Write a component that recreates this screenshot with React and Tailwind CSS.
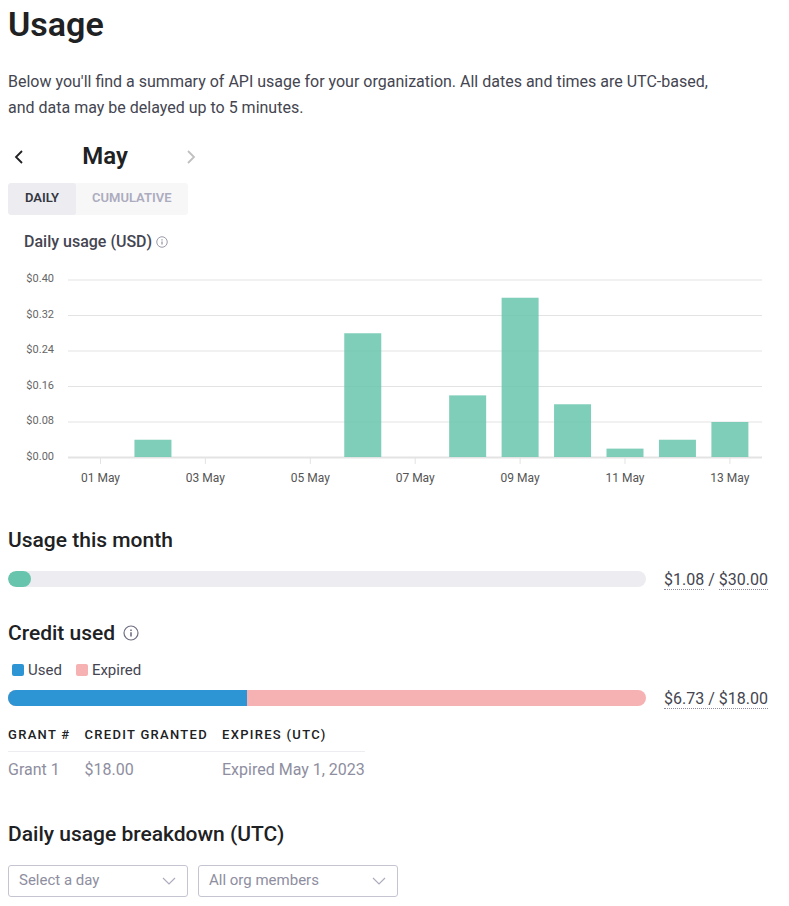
const DAYS = [
  { day: 1, usd: 0 },
  { day: 2, usd: 0.04 },
  { day: 3, usd: 0 },
  { day: 4, usd: 0 },
  { day: 5, usd: 0 },
  { day: 6, usd: 0.28 },
  { day: 7, usd: 0 },
  { day: 8, usd: 0.14 },
  { day: 9, usd: 0.36 },
  { day: 10, usd: 0.12 },
  { day: 11, usd: 0.02 },
  { day: 12, usd: 0.04 },
  { day: 13, usd: 0.08 },
];
const TICKS = [0.4, 0.32, 0.24, 0.16, 0.08, 0];

const yFor = (usd) => 197.5 - usd * 443.75;
const xFor = (day) => 92.5 + (day - 1) * 52.45;

function InfoIcon({ className }) {
  return (
    <svg viewBox="0 0 16 16" fill="none" stroke="currentColor" className={className} aria-hidden="true">
      <circle cx="8" cy="8" r="7" strokeWidth="1.2" />
      <path d="M8 7.2v4.2" strokeWidth="1.6" />
      <path d="M8 4.4v1.6" strokeWidth="1.6" />
    </svg>
  );
}

function Chevron({ className, d }) {
  return (
    <svg viewBox="0 0 16 16" fill="none" stroke="currentColor" className={className} aria-hidden="true">
      <path d={d} />
    </svg>
  );
}

function UsageChart() {
  return (
    <svg viewBox="0 0 760 232" className="block w-full" role="img" aria-label="Daily usage in USD">
      {TICKS.map((t) => (
        <g key={t}>
          <line x1="60" x2="754" y1={yFor(t)} y2={yFor(t)} stroke="#e3e3e3" strokeWidth={t === 0 ? 2 : 1.2} />
          <text x="46" y={yFor(t) + 2} textAnchor="end" className="fill-[#666666] text-[11px]">
            ${t.toFixed(2)}
          </text>
        </g>
      ))}
      {DAYS.filter((d) => d.day % 2 === 1).map((d) => (
        <g key={d.day}>
          <line x1={xFor(d.day)} x2={xFor(d.day)} y1="198" y2="204" stroke="#e3e3e3" />
          <text x={xFor(d.day)} y="222" textAnchor="middle" className="fill-[#555555] text-[12px]">
            {String(d.day).padStart(2, "0")} May
          </text>
        </g>
      ))}
      {DAYS.filter((d) => d.usd > 0).map((d) => (
        <rect
          key={d.day}
          x={xFor(d.day) - 18.5}
          y={yFor(d.usd)}
          width="37"
          height={197 - yFor(d.usd)}
          fill="#68c5ad"
          fillOpacity="0.85"
        />
      ))}
    </svg>
  );
}

function Dropdown({ label, text, className }) {
  return (
    <div className={"relative " + className}>
      <select
        aria-label={label}
        className="block h-8 w-full appearance-none rounded-[3px] border border-[#c5c5d2] bg-white pr-8 pb-0.5 pl-2.5 text-[15px] text-[#8e8ea0]"
      >
        <option>{text}</option>
      </select>
      <Chevron d="M2 5l6 6 6-6" className="pointer-events-none absolute top-2 right-[11px] size-4 stroke-[1.2] text-[#acacbe]" />
    </div>
  );
}

const dotted = "border-b border-dotted border-[#8e8ea0]";

export default function App() {
  return (
    <main className="bg-white pr-[21px] pb-2 pl-2 font-[Roboto,'Liberation_Sans',sans-serif] text-[#444550]">
      <h1 className="pt-1 text-[34px] leading-10 font-semibold text-[#202123]">Usage</h1>
      <p className="mt-[25px] pr-10 text-base leading-[26px]">
        Below you'll find a summary of API usage for your organization. All dates and times are UTC-based, and data may
        be delayed up to 5 minutes.
      </p>

      <div className="mt-[19px] flex w-[194px] items-center justify-between">
        <button type="button" aria-label="Previous month" className="p-[3px] text-[#202123]">
          <Chevron d="M11 3L5 9l6 6" className="size-4 stroke-[1.8]" />
        </button>
        <h2 className="text-2xl leading-8 font-semibold text-[#202123]">May</h2>
        <button type="button" aria-label="Next month" disabled className="p-[3px] text-[#c0c0c0]">
          <Chevron d="M5 3l6 6-6 6" className="size-4 stroke-[1.8]" />
        </button>
      </div>

      <div className="mt-[11px] inline-flex h-8 overflow-hidden rounded-[3px] bg-[#f7f7f8] text-[13px] font-semibold">
        <button type="button" className="min-w-[68px] rounded-[3px] bg-[#ececf1] px-4 pb-0.5 text-[#353740]">DAILY</button>
        <button type="button" className="px-4 pb-0.5 text-[#acacbe]">CUMULATIVE</button>
      </div>

      <section>
        <h3 className="mt-[15px] flex items-center gap-1 pl-4 text-base leading-6 font-medium">
          Daily usage (USD)
          <InfoIcon className="size-3 text-[#8e8ea0]" />
        </h3>
        <div className="mt-1.5">
          <UsageChart />
        </div>
      </section>

      <section className="mt-8">
        <h2 className="text-[21px] leading-8 font-medium text-[#202123]">Usage this month</h2>
        <div className="mt-3 flex items-center gap-4">
          <div className="h-4 flex-1 overflow-hidden rounded-full bg-[#ececf1]">
            <div className="h-full w-[3.6%] rounded-full bg-[#68c5ad]" />
          </div>
          <div className="min-w-[106px] pt-0.5 text-right text-base leading-5">
            <span className={dotted}>$1.08</span> / <span className={dotted}>$30.00</span>
          </div>
        </div>
      </section>

      <section className="mt-[27px]">
        <h2 className="flex items-center gap-2 text-[21px] leading-8 font-medium text-[#202123]">
          Credit used
          <InfoIcon className="size-4 text-[#6e6e80]" />
        </h2>
        <ul className="mt-[9px] flex gap-3.5 pl-1 text-[15px] leading-6">
          <li className="flex items-center gap-1">
            <span className="size-3 rounded-xs bg-[#2d95d3]" />
            Used
          </li>
          <li className="flex items-center gap-1">
            <span className="size-3 rounded-xs bg-[#f6b1b2]" />
            Expired
          </li>
        </ul>
        <div className="mt-[5px] flex items-center gap-4">
          <div className="flex h-4 flex-1 overflow-hidden rounded-full bg-[#f6b1b2]">
            <div className="w-[37.4%] bg-[#2d95d3]" />
          </div>
          <div className="min-w-[106px] pt-0.5 text-right text-base leading-5">
            <span className={dotted}>$6.73 / $18.00</span>
          </div>
        </div>
        <table className="mt-[18px] text-left">
          <thead className="text-[13px] leading-4 tracking-widest text-[#202123]">
            <tr className="border-b border-[#ececf1]">
              <th className="pr-3.5 pb-2 font-medium">GRANT #</th>
              <th className="pr-3.5 pb-2 font-medium">CREDIT GRANTED</th>
              <th className="pb-2 font-medium">EXPIRES (UTC)</th>
            </tr>
          </thead>
          <tbody className="text-base leading-6 text-[#8e8ea0]">
            <tr>
              <td className="pt-1.5 pr-3.5">Grant 1</td>
              <td className="pt-1.5 pr-3.5">$18.00</td>
              <td className="pt-1.5">Expired May 1, 2023</td>
            </tr>
          </tbody>
        </table>
      </section>

      <section className="mt-9">
        <h2 className="text-[21px] leading-8 font-medium text-[#202123]">Daily usage breakdown (UTC)</h2>
        <div className="mt-[15px] flex gap-2.5">
          <Dropdown label="Day" text="Select a day" className="w-[180px]" />
          <Dropdown label="Organization member" text="All org members" className="w-[200px]" />
        </div>
      </section>
    </main>
  );
}
